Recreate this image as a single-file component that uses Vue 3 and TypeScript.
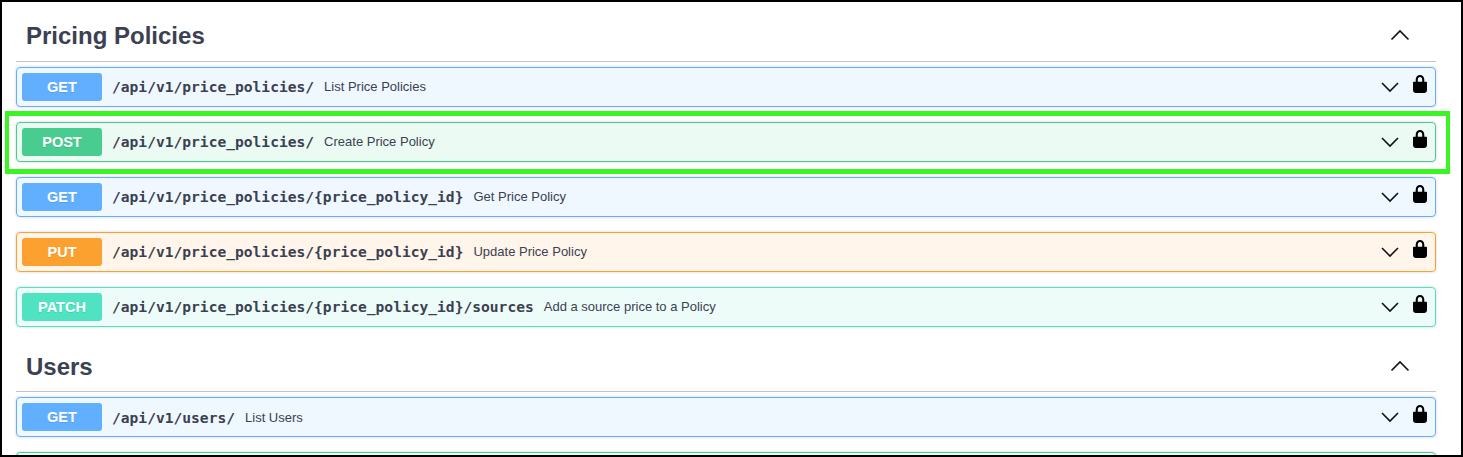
<script setup lang="ts">
interface Op { method: string; path: string; summary: string }
interface Section { title: string; ops: Op[] }

const base = '/api/v1/price_policies/'
const sections: Section[] = [
  {
    title: 'Pricing Policies',
    ops: [
      { method: 'get', path: base, summary: 'List Price Policies' },
      { method: 'post', path: base, summary: 'Create Price Policy' },
      { method: 'get', path: base + '{price_policy_id}', summary: 'Get Price Policy' },
      { method: 'put', path: base + '{price_policy_id}', summary: 'Update Price Policy' },
      { method: 'patch', path: base + '{price_policy_id}/sources', summary: 'Add a source price to a Policy' },
    ],
  },
  {
    title: 'Users',
    ops: [{ method: 'get', path: '/api/v1/users/', summary: 'List Users' }],
  },
]
</script>

<template>
  <div class="frame">
    <section v-for="s in sections" :key="s.title" class="section">
      <header class="tag">
        <h3 class="title">{{ s.title }}</h3>
        <svg class="caret-up" width="20" height="20" viewBox="0 0 20 20">
          <path d="M1.5 14.500 L10 6 L18.500 14.500" fill="none" stroke="#111" stroke-width="1.6" />
        </svg>
      </header>
      <div v-for="(op, i) in s.ops" :key="i" class="op" :class="op.method">
        <span class="badge">{{ op.method.toUpperCase() }}</span>
        <span class="path">{{ op.path }}</span>
        <span class="summary">{{ op.summary }}</span>
        <svg class="caret" width="20" height="20" viewBox="0 0 20 20">
          <path d="M2 6 L10 14 L18 6" fill="none" stroke="#111" stroke-width="1.6" />
        </svg>
        <svg class="lock" width="14" height="18" viewBox="0 0 14 18">
          <path
            fill="#000"
            d="M2.700 8V4.600C2.700 2 4.600 0 7 0s4.300 2 4.300 4.600V8H9.200V4.600C9.200 3.100 8.300 2.100 7 2.100S4.800 3.100 4.800 4.600V8z"
          />
          <path fill="#000" d="M.8 6.800h12.400c.5 0 .8.4.8.8v7.400c0 1.700-1.300 3-3 3H3c-1.700 0-3-1.300-3-3V7.600c0-.4.3-.8.8-.8z" />
        </svg>
      </div>
    </section>
    <div class="op post"></div>
    <div class="highlight"></div>
  </div>
</template>

<style scoped>
.frame {
  position: relative;
  box-sizing: border-box;
  width: 1463px;
  height: 457px;
  overflow: hidden;
  border: 2px solid #000;
  background: #fff;
  padding: 10px 25px 0 14px;
  font-family: "Liberation Sans", Arial, sans-serif;
}
.tag {
  display: flex;
  align-items: center;
  justify-content: space-between;
  height: 50px;
  box-sizing: border-box;
  border-bottom: 1px solid #c4c4c4;
  margin-bottom: 5px;
  padding: 0 26px 4px 10px;
}
.section + .section .tag { padding-bottom: 2px; }
.title {
  margin: 2px 0 0;
  font-size: 24px;
  font-weight: 700;
  color: #3b4151;
}
.caret-up { display: block; }
.op {
  display: flex;
  align-items: center;
  box-sizing: border-box;
  height: 40px;
  margin-bottom: 15px;
  padding: 0 5px;
  border: 1px solid;
  border-radius: 4px;
  box-shadow: 0 0 3px rgba(0, 0, 0, 0.19);
}
.get { background: rgba(97, 175, 254, 0.1); border-color: #61affe; }
.post { background: rgba(73, 204, 144, 0.1); border-color: #49cc90; }
.put { background: rgba(252, 161, 48, 0.1); border-color: #fca130; }
.patch { background: rgba(80, 227, 194, 0.1); border-color: #50e3c2; }
.badge {
  flex: none;
  width: 80px;
  height: 28px;
  line-height: 28px;
  text-align: center;
  border-radius: 3px;
  color: #fff;
  font-size: 14.5px;
  font-weight: 700;
  text-shadow: 0 1px 0 rgba(0, 0, 0, 0.1);
}
.get .badge { background: #61affe; }
.post .badge { background: #49cc90; }
.put .badge { background: #fca130; }
.patch .badge { background: #50e3c2; }
.path {
  margin-left: 10px;
  margin-top: -2px;
  font-family: "DejaVu Sans Mono", "Liberation Mono", monospace;
  font-size: 14.6px;
  font-weight: 700;
  color: #3b4151;
  white-space: nowrap;
}
.section + .section .path { margin-top: 0; }
.summary {
  flex: 1;
  margin-left: 10px;
  font-size: 13px;
  color: #3b4151;
  white-space: nowrap;
  margin-top: -2px;
}
.section + .section .summary { margin-top: 0; }
.caret { flex: none; margin-right: 13px; }
.lock { flex: none; margin-top: -6px; margin-right: 3px; }
.highlight {
  position: absolute;
  left: 3px;
  top: 109px;
  width: 1445px;
  height: 63px;
  box-sizing: border-box;
  border-style: solid;
  border-color: #3bf423;
  border-width: 5px 4px;
  pointer-events: none;
}
</style>
